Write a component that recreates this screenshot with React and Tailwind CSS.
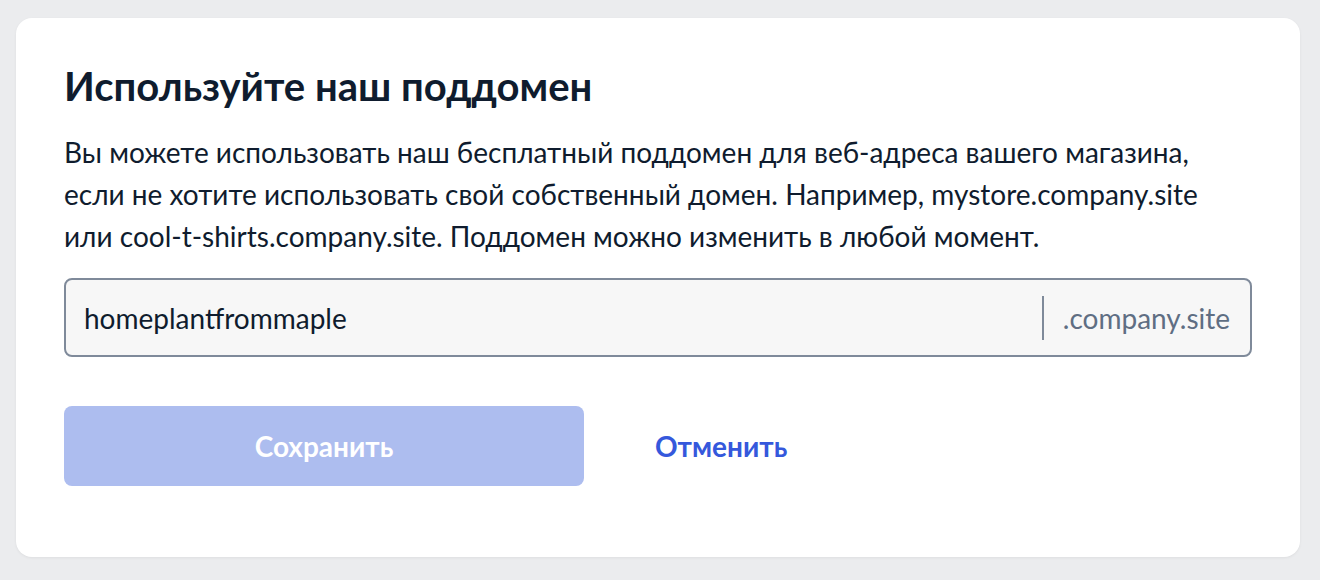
export default function App() {
  return (
    <div
      className="min-h-[580px] bg-[#ebecee] pl-4 pr-5 pt-[18px] pb-[22px]"
      style={{ fontFamily: "Lato, 'Noto Sans', sans-serif" }}
    >
      <div className="rounded-2xl bg-white px-12 pt-[44px] pb-[71px] shadow-[0_1px_3px_rgba(0,0,0,0.06)]">
        <h2 className="text-[40px] leading-[48px] font-bold text-[#0f1c2e]">
          Используйте наш поддомен
        </h2>
        <p className="mt-[21px] text-[28px] leading-[42px] text-[#0f1c2e]">
          Вы можете использовать наш бесплатный поддомен для веб-адреса вашего магазина,
          <br />
          если не хотите использовать свой собственный домен. Например, mystore.company.site
          <br />
          или cool-t-shirts.company.site. Поддомен можно изменить в любой момент.
        </p>
        <div className="mt-[21px] flex h-[79px] items-center rounded-lg border-2 border-[#7f8a9a] bg-[#f7f7f7]">
          <input
            type="text"
            defaultValue="homeplantfrommaple"
            className="h-full min-w-0 flex-1 bg-transparent pl-[18px] text-[28px] text-[#0f1c2e] outline-none"
          />
          <div className="h-[44px] w-[2px] bg-[#7f8a9a]" />
          <span className="pl-[19px] pr-[20px] text-[28px] text-[#5f6e83]">.company.site</span>
        </div>
        <div className="mt-[49px] flex items-center">
          <button
            type="button"
            disabled
            className="h-20 w-[520px] rounded-lg bg-[#adbdef] text-[28px] font-bold text-white"
          >
            Сохранить
          </button>
          <button type="button" className="ml-[71px] text-[28px] font-bold text-[#3558dc]">
            Отменить
          </button>
        </div>
      </div>
    </div>
  );
}
